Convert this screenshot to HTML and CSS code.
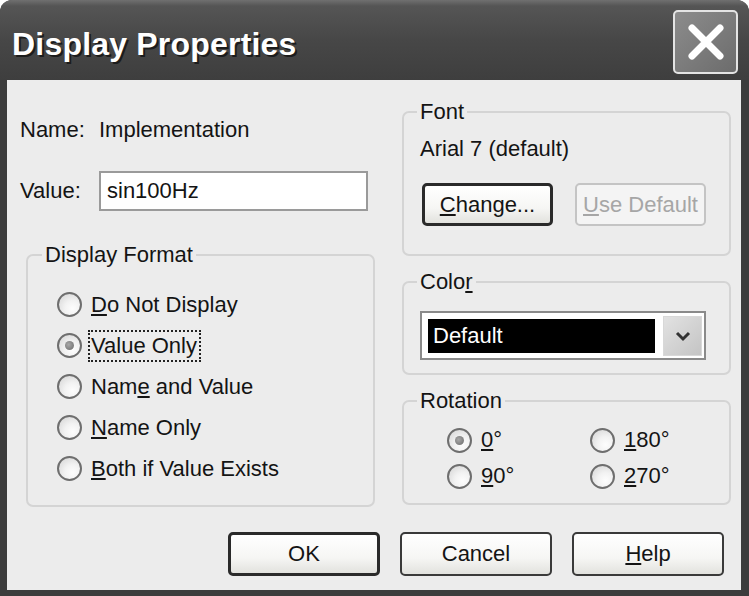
FILE: index.html
```html
<!DOCTYPE html>
<html lang="en">
<head>
  <meta charset="UTF-8" />
  <title>Display Properties</title>
  <link rel="stylesheet" href="styles.css">
</head>
<body>

  <div class="window">
    <!-- Title bar -->
    <div class="titlebar">
      <h1 class="title">Display Properties</h1>
      <button class="close" aria-label="Close">
        <svg width="40" height="40" viewBox="0 0 40 40">
          <path d="M6 6 L34 34 M34 6 L6 34" stroke="#fff" stroke-width="7" stroke-linecap="round"/>
        </svg>
      </button>
    </div>

    <div class="content">
      <div class="panes">

        <!-- Left column -->
        <div class="col-left">
          <div class="field-row name-row">
            <span class="label">Name:</span>
            <span>Implementation</span>
          </div>
          <div class="field-row value-row">
            <span class="label">Value:</span>
            <div class="textbox">sin100Hz</div>
          </div>

          <fieldset class="group format-group">
            <legend>Display Format</legend>
            <div class="radio-row"><span class="radio"></span><span><u>D</u>o Not Display</span></div>
            <div class="radio-row"><span class="radio checked"></span><span class="focus">Value Only</span></div>
            <div class="radio-row"><span class="radio"></span><span>Nam<u>e</u> and Value</span></div>
            <div class="radio-row"><span class="radio"></span><span><u>N</u>ame Only</span></div>
            <div class="radio-row"><span class="radio"></span><span><u>B</u>oth if Value Exists</span></div>
          </fieldset>
        </div>

        <!-- Right column -->
        <div class="col-right">
          <fieldset class="group font-group">
            <legend>Font</legend>
            <div class="font-name">Arial 7 (default)</div>
            <div class="font-buttons">
              <button class="btn btn-default small"><u>C</u>hange...</button>
              <button class="btn small disabled"><u>U</u>se Default</button>
            </div>
          </fieldset>

          <fieldset class="group color-group">
            <legend>Colo<u>r</u></legend>
            <div class="combo">
              <div class="combo-value">Default</div>
              <div class="combo-arrow">
                <svg width="16" height="12" viewBox="0 0 16 12">
                  <path d="M2 3 L8 9 L14 3" fill="none" stroke="#333" stroke-width="3"/>
                </svg>
              </div>
            </div>
          </fieldset>

          <fieldset class="group rotation-group">
            <legend>Rotation</legend>
            <div class="rotation-grid">
              <div class="radio-row"><span class="radio checked"></span><span><u>0</u>°</span></div>
              <div class="radio-row"><span class="radio"></span><span><u>1</u>80°</span></div>
              <div class="radio-row"><span class="radio"></span><span><u>9</u>0°</span></div>
              <div class="radio-row"><span class="radio"></span><span><u>2</u>70°</span></div>
            </div>
          </fieldset>
        </div>
      </div>

      <!-- Dialog buttons -->
      <div class="footer">
        <button class="btn btn-default">OK</button>
        <button class="btn">Cancel</button>
        <button class="btn"><u>H</u>elp</button>
      </div>
    </div>
  </div>

</body>
</html>
```

FILE: styles.css
```css
* {
  margin: 0;
  padding: 0;
  box-sizing: border-box;
}

body {
  background: #fff;
  font-family: 'Liberation Sans', Arial, sans-serif;
  font-size: 22px;
  color: #141414;
}

/* Window frame */
.window {
  width: 749px;
  height: 596px;
  background: #3c3c3c;
  border-radius: 12px 12px 0 0;
  padding: 0 8px 6px 7px;
  display: flex;
  flex-direction: column;
}

.titlebar {
  height: 80px;
  margin: 0 -8px 0 -7px;
  padding: 10px 11px 0 12px;
  border-radius: 12px 12px 0 0;
  background: linear-gradient(#707070 0, #555 6px, #474747 50%, #3e3e3e 100%);
  display: flex;
  align-items: center;
  justify-content: space-between;
}

.title {
  font-family: 'Liberation Sans', Arial, sans-serif;
  font-size: 32px;
  font-weight: bold;
  letter-spacing: 0.2px;
  color: #fff;
  text-shadow: 2px 2px 0 #1c1c1c;
  margin-top: -2px;
}

.close {
  width: 65px;
  height: 64px;
  margin-top: -6px;
  border: 2px solid #e4e4e4;
  border-radius: 5px;
  background: linear-gradient(135deg, #8c8c8c, #6c6c6c);
  display: flex;
  align-items: center;
  justify-content: center;
}

/* Dialog body */
.content {
  flex: 1;
  background: #ececec;
  padding: 20px 17px 14px 13px;
  display: flex;
  flex-direction: column;
}

.panes {
  display: grid;
  grid-template-columns: 355px 329px;
  column-gap: 27px;
}

.field-row {
  display: flex;
  align-items: center;
  line-height: 24px;
}

.label {
  width: 79px;
}

.name-row {
  margin-top: 18px;
}

.value-row {
  margin-top: 29px;
}

.textbox {
  width: 269px;
  height: 40px;
  background: #fff;
  border: 2px solid #9a9a9a;
  padding: 0 6px;
  display: flex;
  align-items: center;
}

/* Group boxes */
.group {
  border: 2px solid #d4d4d4;
  border-radius: 7px;
}

.group legend {
  line-height: 24px;
  padding: 0 3px;
  margin-left: -3px;
}

.format-group {
  margin: 32px 0 0 6px;
  padding: 17px 10px 16px 29px;
}

.format-group legend {
  margin-left: -15px;
}

.radio-row {
  display: flex;
  align-items: center;
  height: 41px;
}

.radio {
  width: 25px;
  height: 25px;
  border-radius: 50%;
  border: 2px solid #6e6e6e;
  background: radial-gradient(circle at 65% 70%, #fdfdfd 0, #f2f2f2 40%, #d2d2d2 100%);
  margin-right: 9px;
  display: flex;
  align-items: center;
  justify-content: center;
}

.radio.checked::after {
  content: "";
  width: 9px;
  height: 9px;
  border-radius: 50%;
  background: radial-gradient(circle at 40% 40%, #a8a8a8, #6a6a6a);
}

.focus {
  outline: 2px dotted #222;
  outline-offset: 1px;
  line-height: 26px;
  padding-right: 1px;
}

.font-group {
  padding: 13px 10px 28px 16px;
}

.font-name {
  line-height: 24px;
}

.font-buttons {
  display: flex;
  gap: 22px;
  margin: 22px 0 0 2px;
}

.color-group {
  margin-top: 14px;
  padding: 17px 10px 13px 16px;
}

.combo {
  width: 286px;
  height: 49px;
  border: 2px solid #8a8a8a;
  background: #fff;
  padding: 5px 2px 5px 6px;
  display: flex;
  align-items: center;
  gap: 8px;
}

.combo-value {
  width: 227px;
  height: 34px;
  background: #000;
  color: #fff;
  padding-left: 5px;
  display: flex;
  align-items: center;
}

.combo-arrow {
  width: 39px;
  height: 40px;
  background: linear-gradient(135deg, #e2e2e2, #c4c4c4);
  border: 1px solid #d8d8d8;
  display: flex;
  align-items: center;
  justify-content: center;
}

.rotation-group {
  margin-top: 14px;
  padding: 9px 10px 9px 43px;
}

.rotation-group legend {
  margin-left: -30px;
}

.rotation-grid {
  display: grid;
  grid-template-columns: 143px auto;
}

.rotation-grid .radio-row {
  height: 36px;
}

/* Buttons */
.btn {
  font-family: 'Liberation Sans', Arial, sans-serif;
  font-size: 22px;
  color: #141414;
  width: 152px;
  height: 44px;
  border: 2px solid #3a3a3a;
  border-radius: 5px;
  background: linear-gradient(#ffffff 0, #f6f6f4 60%, #e2e2de 100%);
}

.btn-default {
  border: 3px solid #2a2a2a;
}

.btn.small {
  width: 131px;
  height: 43px;
}

.btn.disabled {
  color: #a6a6a6;
  border-color: #c4c4c4;
  background: #f4f4f4;
}

.footer {
  margin-top: auto;
  display: flex;
  justify-content: flex-end;
  gap: 20px;
}
```
